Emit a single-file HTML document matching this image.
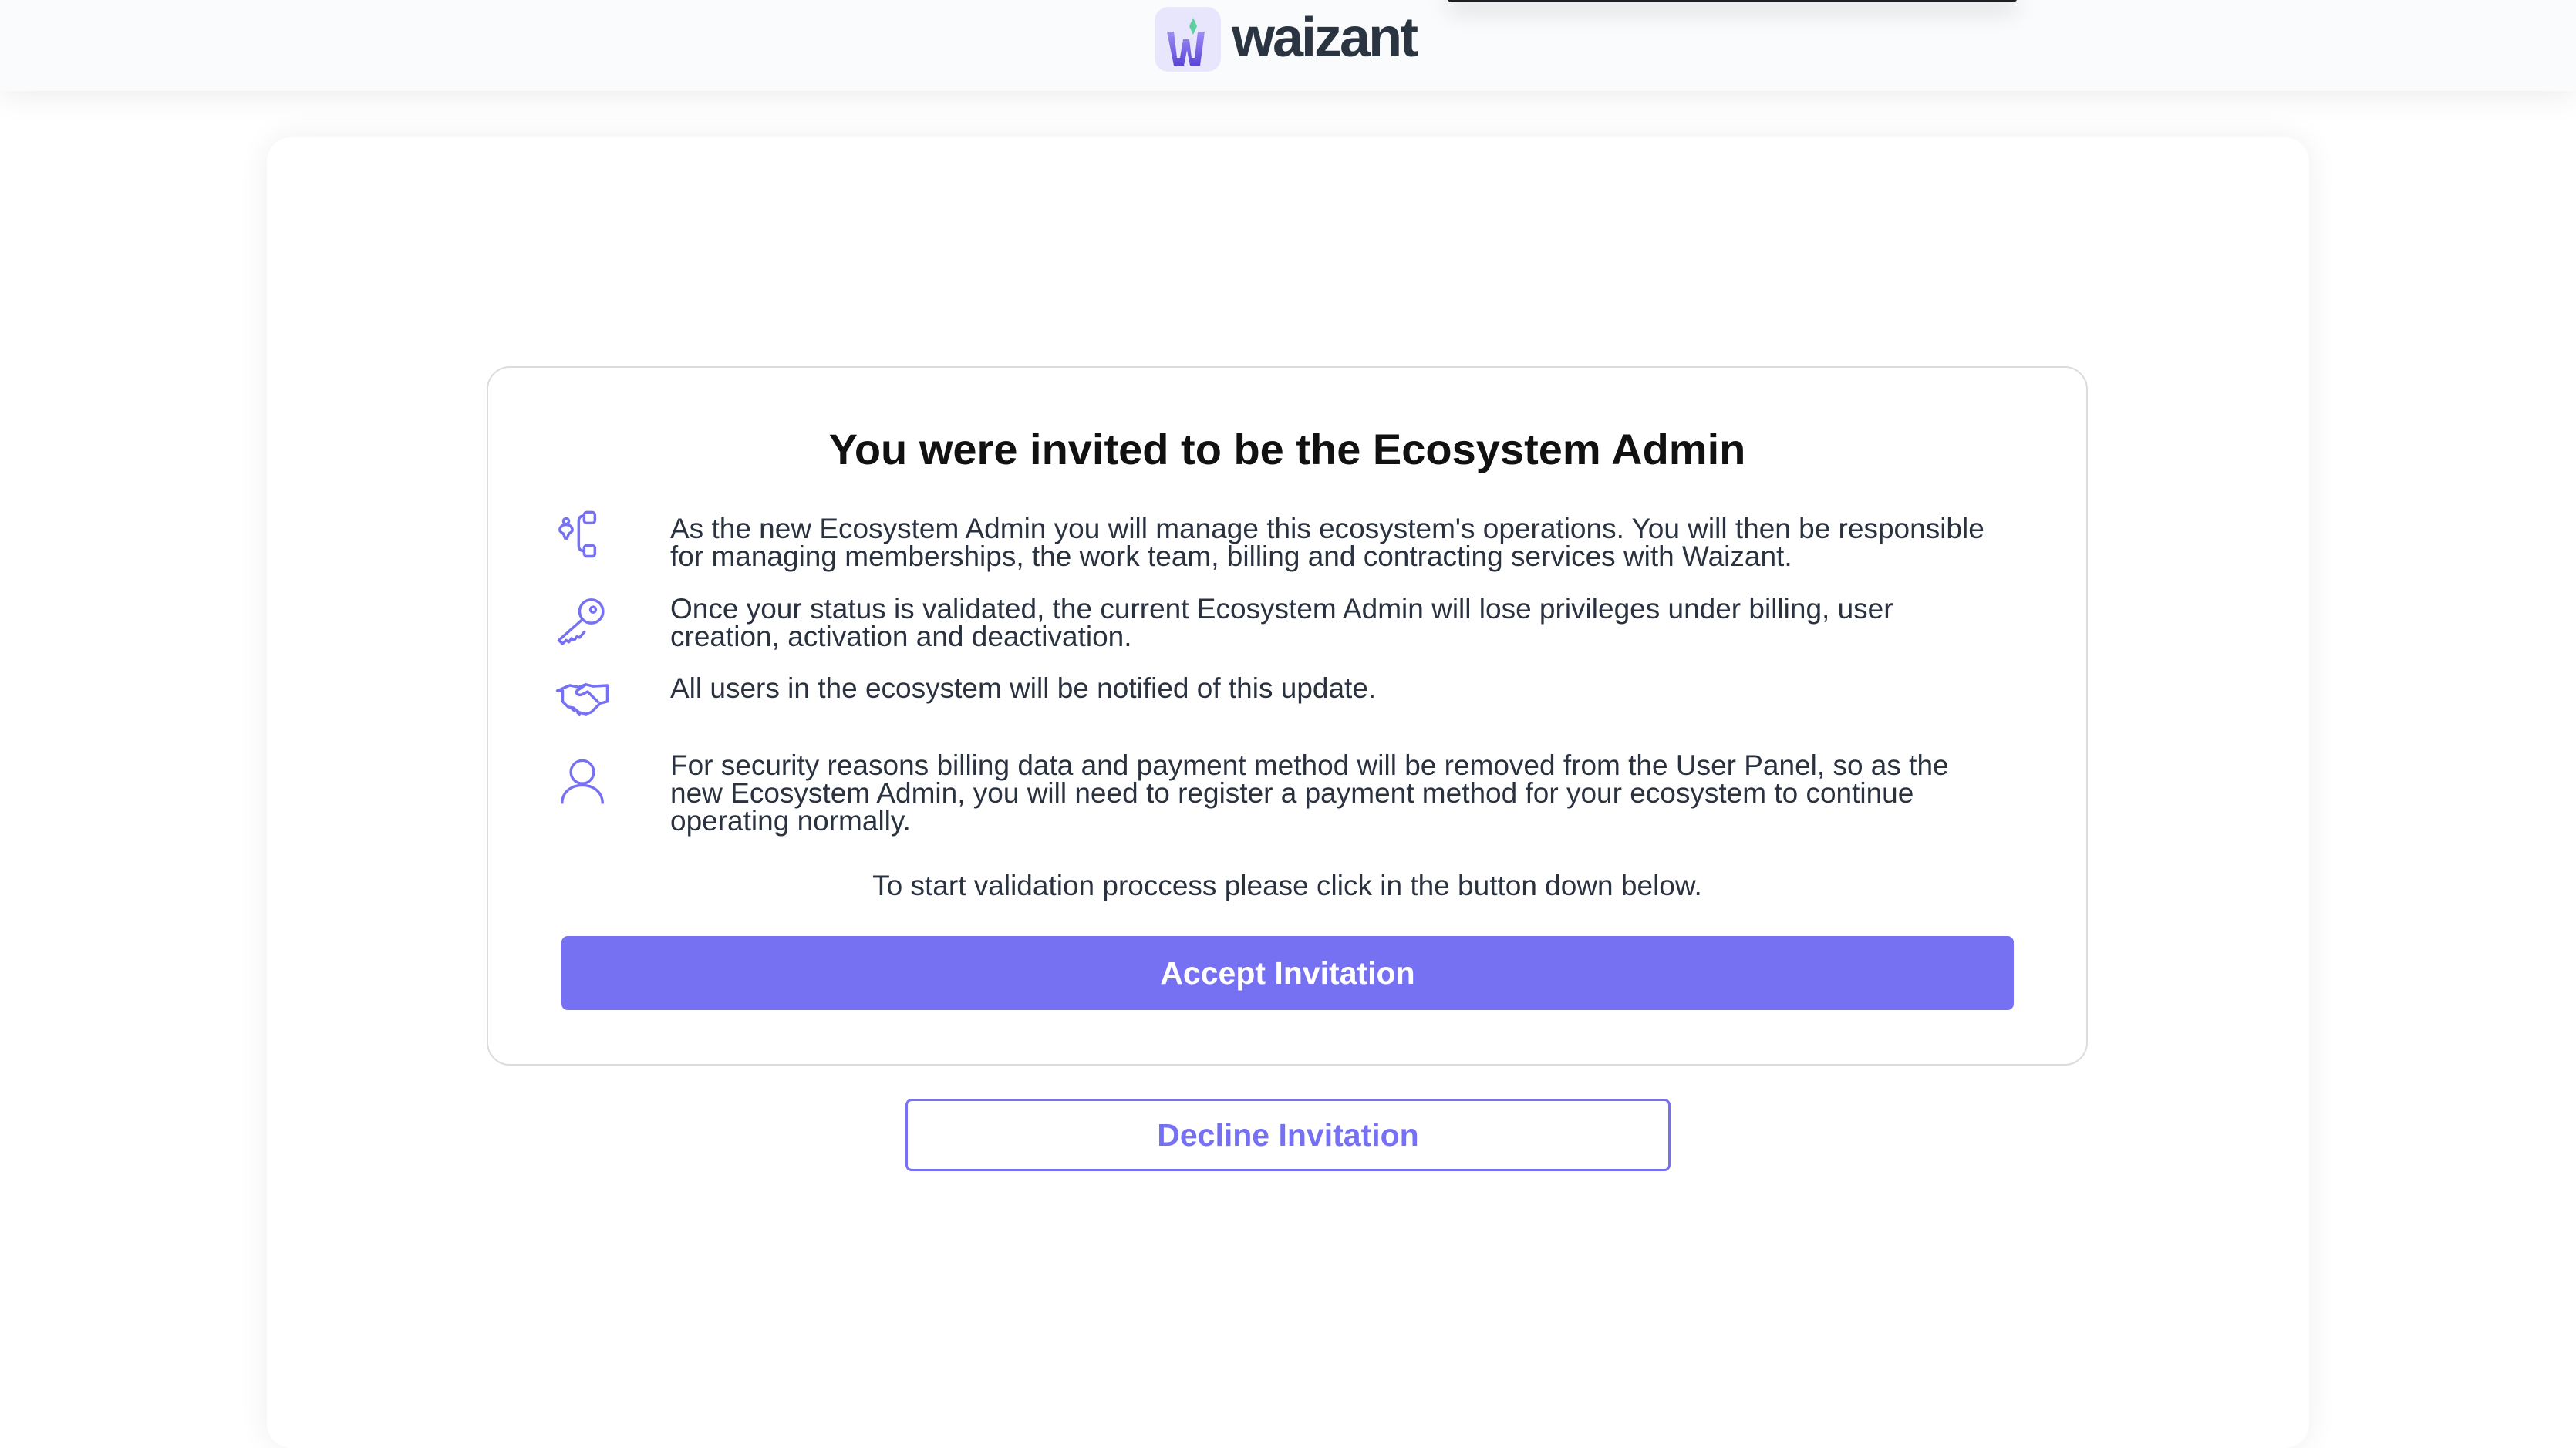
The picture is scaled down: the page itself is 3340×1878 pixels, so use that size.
<!DOCTYPE html>
<html><head><meta charset="utf-8"><style>
*{box-sizing:border-box;margin:0;padding:0}
body{width:3340px;height:1794px;overflow:hidden;background:#fff;font-family:"Liberation Sans",sans-serif;color:#2a3240;position:relative}
.hdr{position:absolute;left:0;top:0;width:3340px;height:118px;background:#fafbfc;box-shadow:0 6px 40px rgba(0,0,0,.08)}
.bar{position:absolute;left:1876px;top:-10px;width:740px;height:13px;background:#1e1f22;border-radius:8px;box-shadow:0 10px 30px rgba(0,0,0,.18)}
.logo{position:absolute;left:1497px;top:9px;width:86px;height:84px;border-radius:18px;background:#e7e6fc}
.wz{position:absolute;left:1597px;top:8px;font-size:72px;font-weight:bold;letter-spacing:-3px;color:#2b3441}
.card{position:absolute;left:346px;top:178px;width:2648px;height:1700px;background:#fff;border-radius:32px;box-shadow:0 0 40px rgba(0,0,0,.07)}
.box{position:absolute;left:631px;top:475px;width:2076px;height:907px;border:2px solid #dcdcdc;border-radius:30px;background:#fff}
h1{position:absolute;left:631px;width:2076px;top:550px;text-align:center;font-size:56px;font-weight:bold;color:#111}
.p{position:absolute;left:869px;width:1720px;font-size:37px;line-height:36px;color:#2a3240}
.ic{position:absolute;left:720px}
.c{position:absolute;left:631px;width:2076px;top:1128px;text-align:center;font-size:37px}
.acc{position:absolute;left:728px;top:1214px;width:1883px;height:96px;background:#7670f2;border-radius:8px;color:#fff;font-size:41px;font-weight:bold;text-align:center;line-height:96px}
.dec{position:absolute;left:1174px;top:1425px;width:992px;height:94px;border:3px solid #7670f2;border-radius:8px;color:#7670f2;font-size:41px;font-weight:bold;text-align:center;line-height:88px;background:#fff}
</style></head><body>
<div class="hdr"></div>
<div class="bar"></div>
<div class="logo"><svg width="86" height="84" viewBox="0 0 86 84"><defs><linearGradient id="g" x1="0" y1="0" x2="0" y2="1"><stop offset="0" stop-color="#a08df5"/><stop offset="1" stop-color="#5b45d6"/></linearGradient></defs><path d="M16 32h9l4 34h4l4-24h8l3 24h4l4-34h9l-6 44h-13l-4-20-4 20h-13z" fill="url(#g)"/><path d="M50 14l5 11-5 11-5-11z" fill="#5fcf9f"/></svg></div>
<div class="wz">waizant</div>
<div class="card"></div>
<div class="box"></div>
<h1>You were invited to be the Ecosystem Admin</h1>
<svg class="ic" style="top:662px" width="70" height="70" viewBox="0 0 60 60" fill="none" stroke="#7670f2" stroke-width="3"><circle cx="12" cy="12" r="3"/><path d="M12 16c-5 0-7 3-7 6 0 2 3 3 4 4l2 5h2l2-5c1-1 4-2 4-4 0-3-2-6-7-6z"/><path d="M32 6c-4 0-6 2-6 6v27c0 4 2 6 6 6"/><rect x="32" y="2" width="12" height="12" rx="3"/><rect x="32" y="39" width="12" height="12" rx="3"/></svg>
<svg class="ic" style="top:772px" width="70" height="70" viewBox="0 0 60 60" fill="none" stroke="#7670f2" stroke-width="3" stroke-linejoin="round"><circle cx="40" cy="18" r="13"/><circle cx="42" cy="16" r="3"/><path d="M30 27L4 50l4 4 4-4 3 2 3-4 3 2 3-4 3 1 6-7"/></svg>
<svg class="ic" style="top:882px" width="70" height="58" viewBox="0 0 60 50" fill="none" stroke="#7670f2" stroke-width="3" stroke-linejoin="round"><path d="M2 12l14-6 10 2 8-3 8 2 16-1v18l-8 2-10 10-6 2-8-2-6-5-6-1-6-6V12z"/><path d="M34 5l-10 7c-2 3 2 6 6 4l6-3 12 12"/><path d="M18 32l4 3M24 36l4 3"/></svg>
<svg class="ic" style="top:983px" width="70" height="64" viewBox="0 0 60 56" fill="none" stroke="#7670f2" stroke-width="3"><circle cx="30" cy="16" r="13"/><path d="M7 52c0-13 10-21 23-21s23 8 23 21"/></svg>
<div class="p" style="top:668px">As the new Ecosystem Admin you will manage this ecosystem's operations. You will then be responsible for managing memberships, the work team, billing and contracting services with Waizant.</div>
<div class="p" style="top:772px">Once your status is validated, the current Ecosystem Admin will lose privileges under billing, user creation, activation and deactivation.</div>
<div class="p" style="top:875px">All users in the ecosystem will be notified of this update.</div>
<div class="p" style="top:975px">For security reasons billing data and payment method will be removed from the User Panel, so as the new Ecosystem Admin, you will need to register a payment method for your ecosystem to continue operating normally.</div>
<div class="c">To start validation proccess please click in the button down below.</div>
<div class="acc">Accept Invitation</div>
<div class="dec">Decline Invitation</div>
</body></html>
